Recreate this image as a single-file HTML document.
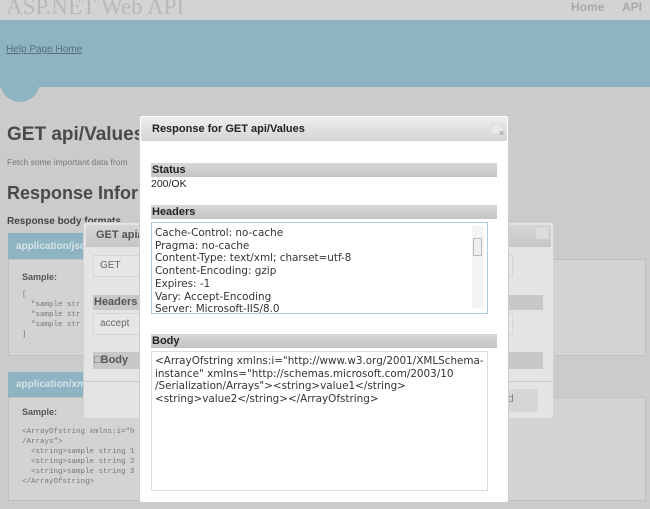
<!DOCTYPE html>
<html><head><style>
*{margin:0;padding:0;box-sizing:border-box}
body{width:650px;height:509px;overflow:hidden;background:#cbcbcb;font-family:"Liberation Sans",sans-serif;position:relative}
.a{position:absolute}
.bar{background:linear-gradient(#d8d8d8,#c4c4c4);font-weight:bold;font-size:11px;color:#222;padding-left:1px;line-height:14px}
.mono{font-family:"Liberation Mono",monospace;font-size:7.5px;color:#777;line-height:10px;white-space:pre}
.txt{font-family:"DejaVu Sans",sans-serif;font-size:10.4px;color:#333;line-height:12.7px;white-space:pre}
</style></head><body>
<div class="a" style="left:0;top:0;width:650px;height:20px;background:#d3d3d3"></div>
<div class="a" style="left:6px;top:-6px;font-family:'Liberation Serif',serif;font-size:23px;color:#b8b8b8">ASP.NET Web API</div>
<div class="a" style="left:571px;top:0;font-size:12px;font-weight:bold;color:#a8a8a8">Home</div>
<div class="a" style="left:622px;top:0;font-size:12px;font-weight:bold;color:#a8a8a8">API</div>
<div class="a" style="left:0;top:20px;width:650px;height:67px;background:#8fb4c1"></div>
<div class="a" style="left:0;top:72px;width:40px;height:30px;border-radius:0 0 20px 20px;background:#8fb4c1"></div>
<div class="a" style="left:6px;top:44px;font-size:10px;color:#5a6e78;text-decoration:underline">Help Page Home</div>
<div class="a" style="left:7px;top:124px;font-size:19px;font-weight:bold;color:#4a4a4a">GET api/Values</div>
<div class="a" style="left:7px;top:157px;font-size:8.5px;color:#777">Fetch some important data from</div>
<div class="a" style="left:7px;top:183px;font-size:18px;font-weight:bold;color:#4a4a4a">Response Inform</div>
<div class="a" style="left:7px;top:216px;font-size:10px;font-weight:bold;color:#444">Response body formats</div>
<div class="a" style="left:8px;top:233px;width:120px;height:26px;background:#8fb4c1;color:#d4e3ea;font-size:10px;font-weight:bold;padding:8px 8px">application/json</div>
<div class="a" style="left:8px;top:259px;width:638px;height:97px;background:#d3d3d3;border:1px solid #c0c0c0"></div>
<div class="a" style="left:22px;top:272px;font-size:9px;font-weight:bold;color:#555">Sample:</div>
<div class="a mono" style="left:22px;top:290px">[
  "sample str
  "sample str
  "sample str
]</div>
<div class="a" style="left:8px;top:372px;width:120px;height:25px;background:#8fb4c1;color:#d4e3ea;font-size:10px;font-weight:bold;padding:7px 8px">application/xml</div>
<div class="a" style="left:8px;top:397px;width:638px;height:104px;background:#d3d3d3;border:1px solid #c0c0c0"></div>
<div class="a" style="left:22px;top:407px;font-size:9px;font-weight:bold;color:#555">Sample:</div>
<div class="a mono" style="left:22px;top:427px">&lt;ArrayOfstring xmlns:i="h                                                              003/10/Serialization
/Arrays"&gt;
  &lt;string&gt;sample string 1
  &lt;string&gt;sample string 2
  &lt;string&gt;sample string 3
&lt;/ArrayOfstring&gt;</div>
<!-- middle dialog -->
<div class="a" style="left:83px;top:222px;width:471px;height:197px;background:#e4e4e4;border:1px solid #d0d0d0;border-radius:3px"></div>
<div class="a" style="left:86px;top:225px;width:465px;height:22px;background:linear-gradient(#d6d6d6,#c6c6c6);font-size:11px;font-weight:bold;color:#555;padding:4px 10px">GET api/Values</div>
<div class="a" style="left:536px;top:228px;width:12px;height:11px;background:#ddd"></div>
<div class="a" style="left:93px;top:255px;width:420px;height:22px;border:1px solid #d6d6d6;background:#e6e6e6;font-size:10px;color:#666;padding:4px 6px">GET</div>
<div class="a bar" style="left:93px;top:295px;width:450px;height:15px;color:#555;background:#c8c8c8">Headers</div>
<div class="a" style="left:93px;top:313px;width:420px;height:22px;border:1px solid #d6d6d6;background:#e6e6e6;font-size:10px;color:#666;padding:4px 6px">accept</div>
<div class="a bar" style="left:93px;top:352px;width:450px;height:17px;color:#555;background:#c8c8c8;line-height:17px">&#9633;Body</div>
<div class="a" style="left:84px;top:381px;width:469px;height:1px;background:#c8c8c8"></div>
<div class="a" style="left:480px;top:389px;width:58px;height:23px;background:#d6d6d6;border-radius:3px;font-size:11px;color:#888;padding:4px 8px">Send</div>
<!-- main dialog -->
<div class="a" style="left:139px;top:115px;width:370px;height:388px;background:#fff;border:1px solid #ccc;border-radius:3px"></div>
<div class="a" style="left:141px;top:117px;width:366px;height:24px;background:linear-gradient(#eee,#d4d4d4);border-radius:2px;font-size:11px;font-weight:bold;color:#222;padding:6px 11px">Response for GET api/Values</div>
<div class="a" style="left:491px;top:123px;width:12px;height:11px;background:#e8e8e8;border:1px solid #ddd"></div>
<div class="a" style="left:499px;top:128px;font-size:9px;color:#888">&times;</div>
<div class="a bar" style="left:151px;top:163px;width:346px;height:14px">Status</div>
<div class="a" style="left:151px;top:178px;font-size:10.5px;color:#222">200/OK</div>
<div class="a bar" style="left:151px;top:205px;width:346px;height:14px">Headers</div>
<div class="a" style="left:151px;top:222px;width:337px;height:92px;border:1px solid #a8d0dc"></div>
<div class="a txt" style="left:155px;top:227px">Cache-Control: no-cache
Pragma: no-cache
Content-Type: text/xml; charset=utf-8
Content-Encoding: gzip
Expires: -1
Vary: Accept-Encoding
Server: Microsoft-IIS/8.0</div>
<div class="a" style="left:472px;top:226px;width:12px;height:82px;background:#f4f4f4"></div>
<div class="a" style="left:473px;top:238px;width:9px;height:18px;border:1px solid #bbb;background:#eee"></div>
<div class="a bar" style="left:151px;top:334px;width:346px;height:14px">Body</div>
<div class="a" style="left:151px;top:351px;width:337px;height:140px;border:1px solid #ddd"></div>
<div class="a txt" style="left:155px;top:355px">&lt;ArrayOfstring xmlns:i="http://www.w3.org/2001/XMLSchema-
instance" xmlns="http://schemas.microsoft.com/2003/10
/Serialization/Arrays"&gt;&lt;string&gt;value1&lt;/string&gt;
&lt;string&gt;value2&lt;/string&gt;&lt;/ArrayOfstring&gt;</div>
</body></html>
